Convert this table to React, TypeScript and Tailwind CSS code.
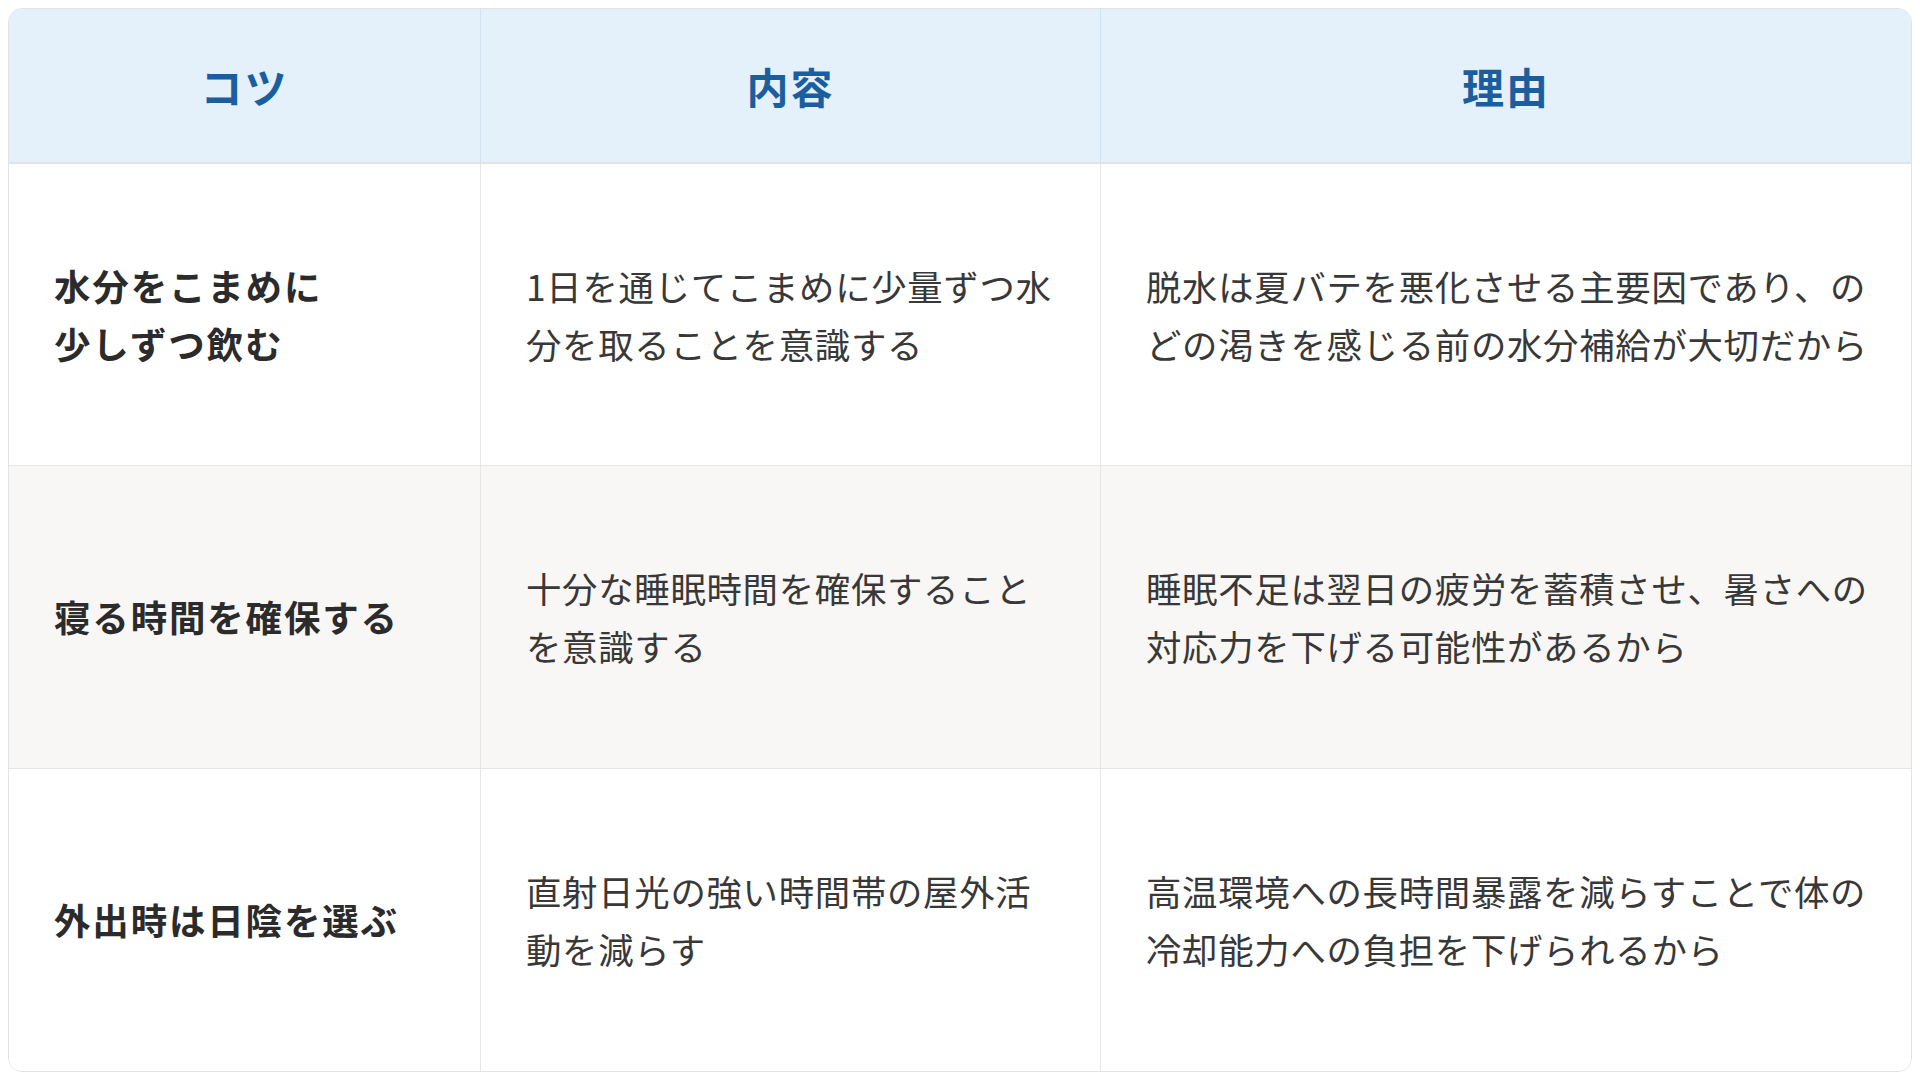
import React from 'react';

type Row = {
    tip: React.ReactNode;
    detail: string;
    reason: string;
    shaded?: boolean;
};

const rows: Row[] = [
    {
        tip: (
            <>
                水分をこまめに
                <br />
                少しずつ飲む
            </>
        ),
        detail: '1日を通じてこまめに少量ずつ水分を取ることを意識する',
        reason: '脱水は夏バテを悪化させる主要因であり、のどの渇きを感じる前の水分補給が大切だから',
    },
    {
        tip: '寝る時間を確保する',
        detail: '十分な睡眠時間を確保することを意識する',
        reason: '睡眠不足は翌日の疲労を蓄積させ、暑さへの対応力を下げる可能性があるから',
        shaded: true,
    },
    {
        tip: '外出時は日陰を選ぶ',
        detail: '直射日光の強い時間帯の屋外活動を減らす',
        reason: '高温環境への長時間暴露を減らすことで体の冷却能力への負担を下げられるから',
    },
];

const font = "font-['Noto_Sans_CJK_JP','Noto_Sans',sans-serif]";

const App: React.FC = () => {
    return (
        <div className={`h-screen w-full bg-white p-2 ${font}`}>
            <div className="grid h-full grid-cols-[472px_620px_1fr] grid-rows-[155px_1fr_1fr_1fr] overflow-hidden rounded-[14px] border border-[#e3e3e3]">
                {/* header */}
                {['コツ', '内容', '理由'].map((h, i) => (
                    <div
                        key={h}
                        className={`flex items-center justify-center border-b-2 border-b-[#e3e3e3] bg-[#e4f0fa] text-[42px] font-bold tracking-[0.05em] text-[#1b5e9f] ${
                            i < 2 ? 'border-r border-r-[#cfe3f5]' : ''
                        }`}
                    >
                        {h}
                    </div>
                ))}

                {rows.map((r, idx) => {
                    const bg = r.shaded ? 'bg-[#f8f7f5]' : 'bg-white';
                    const bottom = idx < rows.length - 1 ? 'border-b border-b-[#e6e6e6]' : '';
                    return (
                        <React.Fragment key={idx}>
                            <div className={`flex items-center border-r border-r-[#e6e6e6] pl-[45px] pr-[40px] ${bg} ${bottom}`}>
                                <p className="text-[36.5px] font-bold leading-[58px] tracking-[0.05em] text-[#2b2b2b]">
                                    {r.tip}
                                </p>
                            </div>
                            <div className={`flex items-center border-r border-r-[#e6e6e6] pl-[45px] pr-[40px] ${bg} ${bottom}`}>
                                <p className="text-[35.4px] leading-[58px] tracking-[0.02em] text-[#383838]">
                                    {r.detail}
                                </p>
                            </div>
                            <div className={`flex items-center pl-[45px] pr-[40px] ${bg} ${bottom}`}>
                                <p className="text-[35.4px] leading-[58px] tracking-[0.02em] text-[#383838]">
                                    {r.reason}
                                </p>
                            </div>
                        </React.Fragment>
                    );
                })}
            </div>
        </div>
    );
};

export default App;
